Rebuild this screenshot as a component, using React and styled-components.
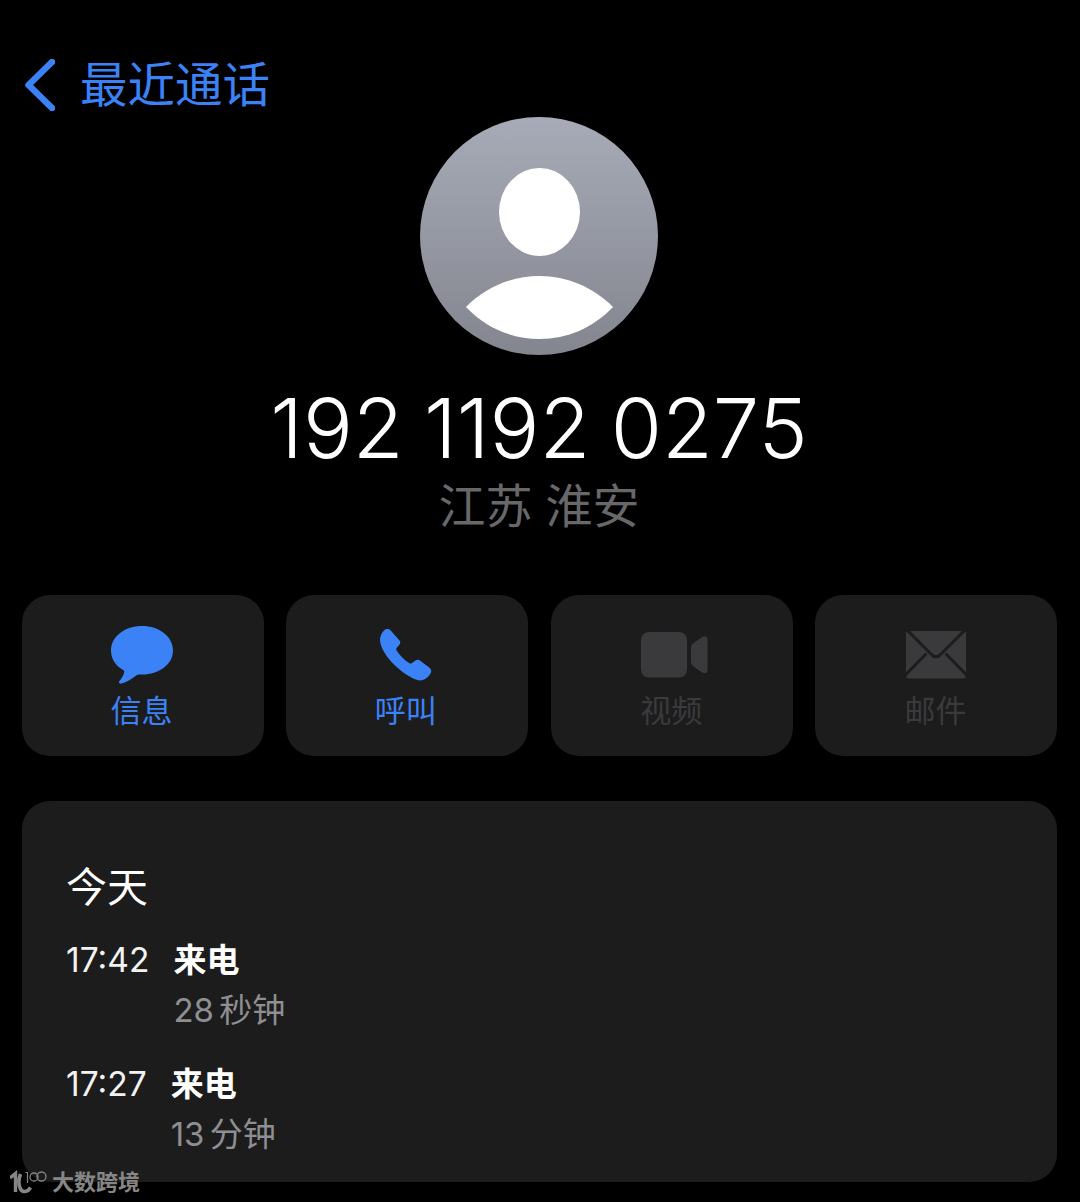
import React from "react";
import styled, { createGlobalStyle } from "styled-components";

const GlobalStyle = createGlobalStyle`
  html, body {
    margin: 0;
    padding: 0;
    background: #000;
  }
  body {
    font-family: Inter, "Noto Sans CJK SC", sans-serif;
  }
`;

const Page = styled.div`
  position: relative;
  width: 1080px;
  height: 1202px;
  overflow: hidden;
  box-sizing: border-box;
  padding: 0 23px 0 22px;
  background: #000;
`;

const BackBar = styled.div`
  display: flex;
  align-items: center;
  height: 52px;
  padding: 59px 0 0 2px;
  gap: 25px;
  color: #3b82f6;
`;

const BackLabel = styled.span`
  font-size: 47.5px;
  line-height: 52px;
`;

const Profile = styled.div`
  display: flex;
  flex-direction: column;
  align-items: center;
  padding: 6px 1px 0 0;
`;

const Number = styled.div`
  margin-top: 24px;
  color: #fff;
  font-size: 83px;
  font-weight: 350;
  line-height: 98px;
  word-spacing: -3px;
  white-space: nowrap;
`;

const Location = styled.div`
  margin-top: 1px;
  color: #68686a;
  font-size: 47px;
  line-height: 56px;
`;

const Actions = styled.div`
  display: grid;
  grid-template-columns: repeat(4, 242px);
  justify-content: space-between;
  margin-top: 61px;
`;

const ActionCard = styled.div`
  display: flex;
  flex-direction: column;
  align-items: center;
  height: 161px;
  box-sizing: border-box;
  padding: 30px ${(p) => (p.$active ? 3 : 1)}px 0 0;
  border-radius: 28px;
  background: #1c1c1c;
  color: ${(p) => (p.$active ? "#3b82f6" : "#3a3a3c")};
`;

const IconSlot = styled.div`
  display: flex;
  align-items: center;
  justify-content: center;
  height: 60px;
`;

const ActionLabel = styled.div`
  margin-top: 8px;
  font-size: 31px;
  line-height: 36px;
`;

const HistoryPanel = styled.div`
  height: 381px;
  box-sizing: border-box;
  margin-top: 45px;
  padding: 60px 44px 0;
  border-radius: 28px;
  background: #1c1c1c;
`;

const DayTitle = styled.div`
  color: #fff;
  font-size: 41px;
  line-height: 52px;
`;

const CallRow = styled.div`
  display: flex;
  gap: 24px;
  margin-top: ${(p) => p.$top}px;
`;

const CallTime = styled.div`
  color: #f2f2f2;
  font-size: 33.6px;
  line-height: 40px;
`;

const CallType = styled.div`
  color: #fff;
  font-size: 33px;
  font-weight: 700;
  line-height: 40px;
`;

const CallLength = styled.div`
  margin-top: 10px;
  color: #8e8e93;
  font-size: 33px;
  line-height: 40px;
  word-spacing: -4px;
`;

const Watermark = styled.div`
  position: absolute;
  left: 10px;
  top: 1168px;
  display: flex;
  align-items: center;
  gap: 5px;
  height: 28px;
  color: #868686;
`;

const WatermarkText = styled.span`
  font-size: 22px;
  font-weight: 700;
  line-height: 28px;
`;

function Avatar() {
  return (
    <svg width="238" height="238" viewBox="0 0 238 238">
      <defs>
        <linearGradient id="avatarFill" x1="0" y1="0" x2="0" y2="1">
          <stop offset="0" stopColor="#a7abb7" />
          <stop offset="1" stopColor="#83868e" />
        </linearGradient>
      </defs>
      <circle cx="119" cy="119" r="119" fill="url(#avatarFill)" />
      <ellipse cx="119.5" cy="95" rx="40.5" ry="44" fill="#fff" />
      <path d="M46 190 C66 170 92 159 119.5 159 C147 159 173 170 193 190 C173 211 147 222 119.5 222 C92 222 66 211 46 190 Z" fill="#fff" />
    </svg>
  );
}

function BubbleIcon() {
  return (
    <svg width="62" height="58" viewBox="0 0 62 58" fill="currentColor">
      <path d="M31 0 C48 0 62 10.5 62 24.5 C62 38.5 48 48.5 31 48.5 C29 48.5 27.5 48.4 26 49 C21 52.5 15.5 56.5 10.5 57.6 C8.5 58 7.2 56.6 8.4 55 C10.3 52.7 12.6 49.5 13.2 46.2 C13.3 45.2 13 44.6 12.2 44.1 C4.7 39.8 0 32.8 0 24.5 C0 10.5 14 0 31 0 Z" />
    </svg>
  );
}

function PhoneIcon() {
  return (
    <svg width="52" height="52" viewBox="0 0 52 52" fill="currentColor">
      <path d="M4 1.5 C6 -0.5 9 -0.3 10.5 1.3 L19.5 11.5 C20.6 13 20.5 14.5 19.2 16 L16.8 18.8 C16 19.8 16 20.5 16.6 21.4 C19.5 26 24.5 31 29.5 34.3 C30.3 34.8 31 34.7 32 34 L35.5 31.5 C37 30.5 38.5 30.5 40 31.5 L49.5 38.8 C51.5 40.5 51.7 43 50.2 45 C47.5 49.2 44 51.5 40 51.5 C27 50 0.5 27 0 11 C0 7.5 1.5 4 4 1.5 Z" />
    </svg>
  );
}

function VideoIcon() {
  return (
    <svg width="67" height="46" viewBox="0 0 67 46" fill="currentColor" style={{ marginLeft: 7 }}>
      <rect x="0" y="0" width="46" height="45.5" rx="8" />
      <path d="M50 15.5 Q50 13 52 11.5 L61 5 Q66.5 2.5 66.5 8 L66.5 37.5 Q66.5 43 61 40.5 L52 34 Q50 32.5 50 30 Z" />
    </svg>
  );
}

function MailIcon() {
  return (
    <svg width="60" height="48" viewBox="0 0 60 48" style={{ marginLeft: 2 }}>
      <rect x="0" y="0" width="60" height="47.5" rx="3" fill="currentColor" />
      <path d="M1 -1 L26 24 Q30 27.5 34 24 L59 -1 M-1 44.5 L20.5 22.5 M61 44.5 L39.5 22.5" fill="none" stroke="#1c1c1c" strokeWidth="3" />
    </svg>
  );
}

function WatermarkLogo() {
  return (
    <svg width="37" height="24" viewBox="0 0 37 24" fill="none" stroke="currentColor">
      <path d="M0 8 L5.5 3.5 L5.5 22" strokeWidth="3.4" />
      <path d="M10.5 4 C8.5 9 8.5 15 10.5 19 C12.5 22.5 17.5 22.5 20.5 17.5" strokeWidth="3.6" />
      <path d="M15.5 2.5 L17.5 2.5 L17.5 13" strokeWidth="1.2" />
      <circle cx="24" cy="7" r="4" strokeWidth="1.3" />
      <circle cx="31.5" cy="6.5" r="4.5" strokeWidth="1.3" />
    </svg>
  );
}

const actions = [
  { label: "信息", icon: <BubbleIcon />, active: true },
  { label: "呼叫", icon: <PhoneIcon />, active: true },
  { label: "视频", icon: <VideoIcon /> },
  { label: "邮件", icon: <MailIcon /> },
];

const calls = [
  { time: "17:42", type: "来电", length: "28 秒钟", top: 27 },
  { time: "17:27", type: "来电", length: "13 分钟", top: 34 },
];

export default function App() {
  return (
    <Page>
      <GlobalStyle />
      <BackBar>
        <svg width="31" height="52" viewBox="0 0 31 52" fill="none">
          <path d="M28 3 L4.5 26 L28 49" stroke="currentColor" strokeWidth="6.5" strokeLinecap="round" strokeLinejoin="round" />
        </svg>
        <BackLabel>最近通话</BackLabel>
      </BackBar>

      <Profile>
        <Avatar />
        <Number>192 1192 0275</Number>
        <Location>江苏 淮安</Location>
      </Profile>

      <Actions>
        {actions.map((a) => (
          <ActionCard key={a.label} $active={a.active}>
            <IconSlot>{a.icon}</IconSlot>
            <ActionLabel>{a.label}</ActionLabel>
          </ActionCard>
        ))}
      </Actions>

      <HistoryPanel>
        <DayTitle>今天</DayTitle>
        {calls.map((c) => (
          <CallRow key={c.time} $top={c.top}>
            <CallTime>{c.time}</CallTime>
            <div>
              <CallType>{c.type}</CallType>
              <CallLength>{c.length}</CallLength>
            </div>
          </CallRow>
        ))}
      </HistoryPanel>

      <Watermark>
        <WatermarkLogo />
        <WatermarkText>大数跨境</WatermarkText>
      </Watermark>
    </Page>
  );
}
